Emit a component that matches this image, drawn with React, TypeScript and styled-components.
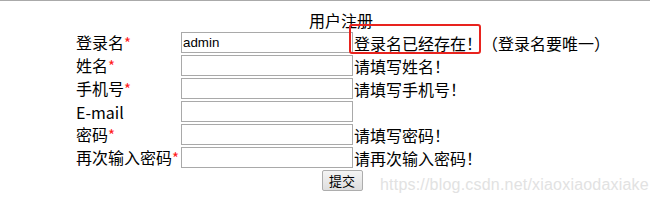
import styled, { createGlobalStyle } from "styled-components";

const GlobalStyle = createGlobalStyle`
    body {
        margin: 0;
        background: #ffffff;
        font-family: "Noto Sans CJK SC", "Noto Sans", sans-serif;
        color: #000000;
    }
`;

type Field = {
    label: string;
    required: boolean;
    value?: string;
    tip?: string;
    warn?: string;
};

const fields: Field[] = [
    { label: "登录名", required: true, value: "admin", warn: "登录名已经存在！", tip: "（登录名要唯一）" },
    { label: "姓名", required: true, tip: "请填写姓名！" },
    { label: "手机号", required: true, tip: "请填写手机号！" },
    { label: "E-mail", required: false },
    { label: "密码", required: true, tip: "请填写密码！" },
    { label: "再次输入密码", required: true, tip: "请再次输入密码！" },
];

const App = () => {
    return (
        <Page>
            <GlobalStyle />
            <Form>
                <Title>用户注册</Title>
                <Rows>
                    {fields.map((f) => (
                        <Row key={f.label}>
                            <Label>
                                {f.label}
                                {f.required && <Star>*</Star>}
                            </Label>
                            <Input defaultValue={f.value ?? ""} />
                            <Tip>
                                {f.warn && <Warn>{f.warn}</Warn>}
                                {f.tip}
                            </Tip>
                        </Row>
                    ))}
                </Rows>
                <ButtonBox>
                    <Button>提交</Button>
                </ButtonBox>
            </Form>
            <Watermark>https://blog.csdn.net/xiaoxiaodaxiake</Watermark>
        </Page>
    );
};

export default App;

const Page = styled.div`
    position: relative;
    width: 650px;
    height: 203px;
    border-top: 1px solid #aaaaaa;
    box-sizing: border-box;
    overflow: hidden;
`;
const Form = styled.div`
    width: 532px;
    margin-left: 75px;
    display: flex;
    flex-direction: column;
`;
const Title = styled.div`
    height: 30px;
    display: flex;
    align-items: center;
    justify-content: center;
    font-size: 16px;
    line-height: 16px;
    padding-top: 7px;
    box-sizing: border-box;
`;
const Rows = styled.div`
    display: flex;
    flex-direction: column;
`;
const Row = styled.div`
    display: grid;
    grid-template-columns: 106px 173px auto;
    align-items: center;
    height: 23px;
`;
const Label = styled.div`
    font-size: 16px;
    line-height: 16px;
    padding-left: 1px;
    white-space: nowrap;
`;
const Star = styled.span`
    color: #ff1a1a;
    font-size: 15px;
`;
const Input = styled.input`
    width: 172px;
    height: 21px;
    box-sizing: border-box;
    border: 1px solid #a9a9a9;
    padding: 0 1px;
    margin: 0;
    font-family: "Liberation Sans", Arial, sans-serif;
    font-size: 13.33px;
    color: #000000;
    outline: none;
`;
const Tip = styled.div`
    font-size: 16px;
    line-height: 16px;
    white-space: nowrap;
`;
const Warn = styled.span`
    position: relative;
    display: inline-block;
    height: 16px;
    line-height: 16px;
    &::after {
        content: "";
        position: absolute;
        left: -5px;
        right: 1px;
        top: -11px;
        bottom: -3px;
        border: 2px solid #e8231e;
        border-radius: 3px;
    }
`;
const ButtonBox = styled.div`
    display: flex;
    justify-content: center;
    padding-top: 1px;
    padding-left: 2px;
`;
const Button = styled.button`
    width: 41px;
    height: 21px;
    padding: 0;
    border: 1px solid #adadad;
    border-radius: 2px;
    background: linear-gradient(#f4f4f4, #dedede);
    font-family: "Noto Sans CJK SC", sans-serif;
    font-size: 13px;
    line-height: 13px;
    color: #000000;
`;
const Watermark = styled.div`
    position: absolute;
    left: 380px;
    top: 175px;
    font-family: "Liberation Sans", Arial, sans-serif;
    font-size: 16px;
    letter-spacing: 0.2px;
    color: #e2e2e2;
    white-space: nowrap;
`;
